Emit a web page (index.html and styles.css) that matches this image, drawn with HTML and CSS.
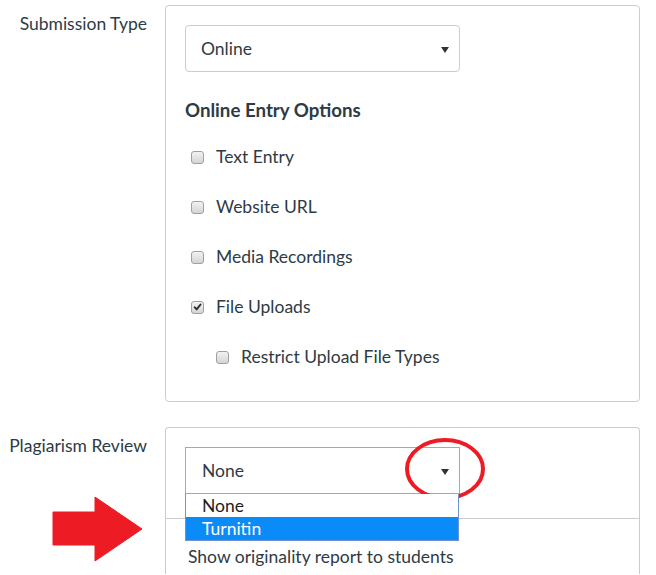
FILE: index.html
```html
<!DOCTYPE html>
<html lang="en">
<head>
<meta charset="UTF-8" />
<title>Assignment Settings</title>
<link rel="stylesheet" href="styles.css">
</head>
<body>

<div class="settings">

  <!-- Submission type -->
  <div class="form-row">
    <div class="row-label">Submission Type</div>
    <div class="panel panel-submission">
      <div class="select">
        <span class="select-value">Online</span>
        <span class="select-arrow"></span>
      </div>

      <div class="section-title">Online Entry Options</div>

      <div class="option-list">
        <div class="option"><span class="checkbox"></span>Text Entry</div>
        <div class="option"><span class="checkbox"></span>Website URL</div>
        <div class="option"><span class="checkbox"></span>Media Recordings</div>
        <div class="option">
          <span class="checkbox checked">
            <svg viewBox="0 0 12 12" width="12" height="12"><path d="M3 6.3 L5.1 8.6 L9.3 3.3" fill="none" stroke="#2b2b2b" stroke-width="2.1" stroke-linecap="round" stroke-linejoin="round"/></svg>
          </span>File Uploads
        </div>
        <div class="option option-nested"><span class="checkbox"></span>Restrict Upload File Types</div>
      </div>
    </div>
  </div>

  <!-- Plagiarism review -->
  <div class="form-row last-row">
    <div class="row-label">Plagiarism Review</div>
    <div class="panel panel-plagiarism">
      <div class="select-wrap">
        <div class="select select-focus">
          <span class="select-value">None</span>
          <span class="select-arrow"></span>
        </div>
        <ul class="dropdown">
          <li>None</li>
          <li class="highlighted">Turnitin</li>
        </ul>
      </div>
      <div class="divider"></div>
      <div class="plain-text">Show originality report to students</div>
    </div>
  </div>

</div>

<!-- Annotations drawn over the screenshot -->
<svg class="mark-arrow" viewBox="0 0 92 65" width="92" height="65">
  <path d="M2 15 H44 V0 L91 32 L44 64 V48 H2 Z" fill="#ed1c24" stroke="#ed1c24" stroke-width="1" stroke-linejoin="round"/>
</svg>
<svg class="mark-circle" viewBox="0 0 84 66" width="84" height="66">
  <ellipse cx="42" cy="33" rx="38" ry="29" fill="none" stroke="#ed1c24" stroke-width="4"/>
</svg>

</body>
</html>
```

FILE: styles.css
```css
* {
  box-sizing: border-box;
}
body {
  margin: 0;
  background: #fff;
  font-family: Lato, "Open Sans", sans-serif;
  font-size: 17.5px;
  color: #2d3b45;
  position: relative;
  height: 575px;
  overflow: hidden;
}

/* Rows */
.settings {
  padding-top: 5px;
}
.form-row {
  display: grid;
  grid-template-columns: 147px 475px;
  column-gap: 18px;
  margin-bottom: 25px;
}
.last-row {
  margin-bottom: 0;
}
.row-label {
  text-align: right;
  padding-top: 7px;
  line-height: 24px;
}

/* Panels */
.panel {
  border: 1px solid #c7cdd1;
  border-radius: 4px;
  padding: 19px;
}
.panel-submission {
  padding-bottom: 32px;
}
.panel-plagiarism {
  border-bottom: none;
  border-radius: 4px 4px 0 0;
  height: 147px;
}

/* Select */
.select {
  width: 275px;
  height: 47px;
  border: 1px solid #c7cdd1;
  border-radius: 4px;
  display: flex;
  align-items: center;
  justify-content: space-between;
  padding: 0 10px 0 15px;
}
.select-arrow {
  width: 0;
  height: 0;
  border-left: 4px solid transparent;
  border-right: 4px solid transparent;
  border-top: 6px solid #333;
  margin-top: 2px;
}
.select-focus {
  border-color: #86aee6;
  border-radius: 0;
  padding-left: 16px;
}
.select-wrap {
  position: relative;
}

/* Open dropdown list */
.dropdown {
  position: absolute;
  top: 47px;
  left: 0;
  width: 274px;
  margin: 0;
  padding: 0;
  list-style: none;
  background: #fff;
  border: 1px solid #6f93cf;
  border-top: none;
  z-index: 2;
}
.dropdown li {
  height: 23px;
  line-height: 23px;
  padding-left: 16px;
  font-size: 17.5px;
  color: #1e1e1e;
}
.dropdown li.highlighted {
  background: #0a8bf8;
  color: #fff;
}

/* Online entry options */
.section-title {
  font-weight: bold;
  font-size: 18.7px;
  line-height: 24px;
  margin-top: 26px;
}
.option-list {
  margin-top: 23px;
  display: flex;
  flex-direction: column;
  gap: 26px;
}
.option {
  display: flex;
  align-items: center;
  line-height: 24px;
  padding-left: 6px;
}
.option-nested {
  padding-left: 31px;
}
.checkbox {
  width: 13px;
  height: 13px;
  border: 1px solid #a0a0a0;
  border-radius: 3px;
  background: linear-gradient(#f2f2f2, #d4d4d4);
  margin-right: 12px;
  display: flex;
  align-items: center;
  justify-content: center;
}
.checkbox svg {
  display: block;
}

/* Plagiarism panel content */
.divider {
  border-top: 1px solid #c7cdd1;
  margin: 24px -19px 0;
}
.plain-text {
  margin-top: 26px;
  padding-left: 3px;
  line-height: 24px;
}

/* Annotations */
.mark-arrow {
  position: absolute;
  left: 51px;
  top: 497px;
}
.mark-circle {
  position: absolute;
  left: 403px;
  top: 436px;
}
```
